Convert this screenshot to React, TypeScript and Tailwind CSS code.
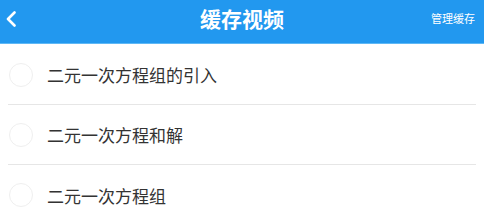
import React from "react";

const items = ["二元一次方程组的引入", "二元一次方程和解", "二元一次方程组"];

const font = { fontFamily: '"Noto Sans CJK SC", "Noto Sans", sans-serif' };

export default function App() {
  return (
    <div className="h-[214px] w-[484px] overflow-hidden bg-white" style={font}>
      <header className="flex h-[44px] items-center justify-between border-b border-[#5fb8f5] bg-[#2298ef] pb-[6px] text-white">
        <div className="flex w-[60px] items-center pl-[5px]">
          <svg width="12" height="16" viewBox="0 0 12 16" fill="none">
            <path d="M9.5 1.5 L3 8 L9.5 14.5" stroke="white" strokeWidth="2.6" strokeLinecap="round" strokeLinejoin="round" />
          </svg>
        </div>
        <h1 className="text-[21px] font-bold leading-none">缓存视频</h1>
        <div className="flex w-[60px] justify-end pr-[9px] text-[11px] leading-none">管理缓存</div>
      </header>
      <ul className="mt-[1px]">
        {items.map((t) => (
          <li key={t} className="mx-[8px] flex h-[60px] items-center border-b border-[#e6e6e6] last:border-b-0">
            <span className="ml-[1px] h-[24px] w-[24px] rounded-full border-[1.5px] border-[#efefef]" />
            <span className="ml-[14px] text-[17px] leading-none text-[#333333]">{t}</span>
          </li>
        ))}
      </ul>
    </div>
  );
}
